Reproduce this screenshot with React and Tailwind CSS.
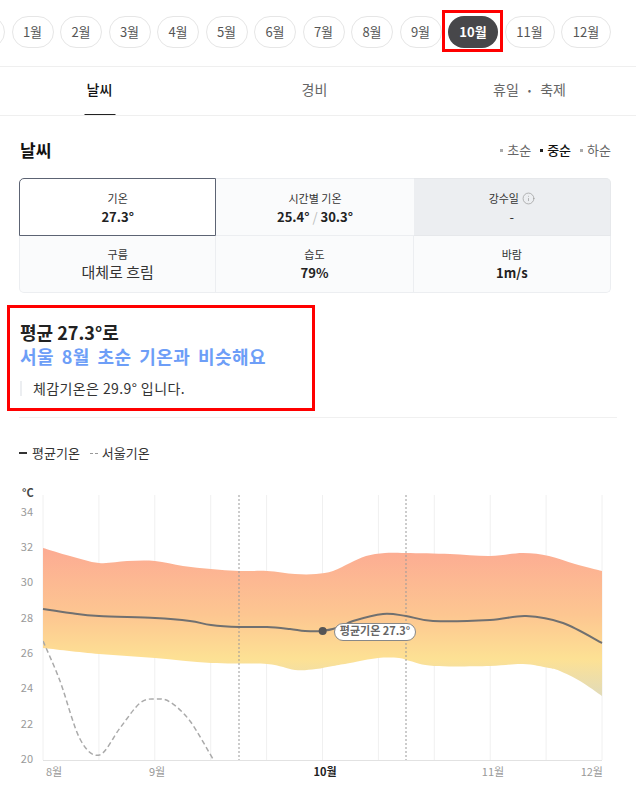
import { Info } from "lucide-react";

const MONTHS = ["1월", "2월", "3월", "4월", "5월", "6월", "7월", "8월", "9월", "10월", "11월", "12월"];

// page y -> svg y: chart svg starts at page y = 480
const BAND_TOP = [
  [43, 67], [70, 75], [99, 82], [127, 80], [155, 80], [183, 85], [211, 88], [239, 90], [267, 90],
  [295, 93], [316, 93], [333, 90], [350, 82], [366, 75], [385, 72], [406, 72], [450, 73], [490, 75],
  [523, 72], [549, 75], [575, 83], [602, 90],
];
const BAND_BOTTOM = [
  [602, 215], [580, 200], [560, 190], [549, 187], [523, 183], [490, 185], [434, 185], [410, 180],
  [399, 177], [378, 177], [350, 182], [333, 185], [316, 188], [295, 189], [267, 183], [211, 182],
  [155, 177], [99, 173], [43, 167],
];
const AVG = [
  [43, 128], [70, 132], [99, 135], [155, 137], [190, 140], [211, 144], [239, 146], [267, 146],
  [290, 148], [305, 150], [322, 150], [340, 146], [353, 140], [383, 133], [406, 135], [433, 140],
  [490, 139], [526, 135], [563, 142], [602, 162],
];
const SEOUL = [
  [43, 160], [60, 200], [80, 258], [99.5, 274], [120, 247], [140, 222], [155, 218], [170, 221],
  [190, 240], [213, 278], [222, 292],
];

function smooth(pts, move = true) {
  let d = move ? `M${pts[0][0]},${pts[0][1]}` : `L${pts[0][0]},${pts[0][1]}`;
  for (let i = 0; i < pts.length - 1; i++) {
    const p0 = pts[i - 1] || pts[i];
    const p1 = pts[i];
    const p2 = pts[i + 1];
    const p3 = pts[i + 2] || p2;
    const c1x = p1[0] + (p2[0] - p0[0]) / 6;
    const c1y = p1[1] + (p2[1] - p0[1]) / 6;
    const c2x = p2[0] - (p3[0] - p1[0]) / 6;
    const c2y = p2[1] - (p3[1] - p1[1]) / 6;
    d += ` C${c1x},${c1y} ${c2x},${c2y} ${p2[0]},${p2[1]}`;
  }
  return d;
}

const yOf = (t) => 279 - (t - 20) * 17.65;

function Chart() {
  const grid = Array.from({ length: 11 }, (_, i) => 43 + i * 55.9);
  return (
    <svg width="636" height="315" className="block">
      <defs>
        <linearGradient id="band" x1="0" y1="67" x2="0" y2="215" gradientUnits="userSpaceOnUse">
          <stop offset="0" stopColor="#fcab93" />
          <stop offset="0.45" stopColor="#fdc691" />
          <stop offset="0.75" stopColor="#fde194" />
          <stop offset="1" stopColor="#e1dbb9" />
        </linearGradient>
        <clipPath id="plot">
          <rect x="43" y="14" width="559" height="265" />
        </clipPath>
      </defs>

      <text x="22" y="13" fontSize="11" fontWeight="600" fill="#444" dominantBaseline="middle">°C</text>
      {[34, 32, 30, 28, 26, 24, 22, 20].map((t) => (
        <text key={t} x="33" y={yOf(t)} fontSize="11" fill="#999" textAnchor="end" dominantBaseline="middle">
          {t}
        </text>
      ))}

      {grid.map((x) => (
        <line key={x} x1={x} y1="14" x2={x} y2="279" stroke="#f0f0f0" />
      ))}
      <line x1="43" y1="279.5" x2="602" y2="279.5" stroke="#e2e2e2" />

      <path d={`${smooth(BAND_TOP)} ${smooth(BAND_BOTTOM, false)} Z`} fill="url(#band)" />

      <line x1="239" y1="14" x2="239" y2="279" stroke="#999" strokeDasharray="2 2" />
      <line x1="406" y1="14" x2="406" y2="279" stroke="#999" strokeDasharray="2 2" />

      <path d={smooth(SEOUL)} fill="none" stroke="#aaa" strokeWidth="1.5" strokeDasharray="5 3" clipPath="url(#plot)" />
      <path d={smooth(AVG)} fill="none" stroke="#707070" strokeWidth="2" />

      <circle cx="322.7" cy="150" r="4" fill="#555" />
      <rect x="334.5" y="142.5" width="81" height="17" rx="8.5" fill="#fff" stroke="#888" />
      <text x="375" y="151.5" fontSize="11" fontWeight="700" fill="#666" textAnchor="middle" dominantBaseline="middle">
        평균기온 27.3°
      </text>

      <text x="46" y="292" fontSize="11" fill="#999" dominantBaseline="middle">8월</text>
      <text x="157" y="292" fontSize="11" fill="#999" textAnchor="middle" dominantBaseline="middle">9월</text>
      <text x="325" y="292" fontSize="11" fontWeight="700" fill="#222" textAnchor="middle" dominantBaseline="middle">10월</text>
      <text x="493" y="292" fontSize="11" fill="#999" textAnchor="middle" dominantBaseline="middle">11월</text>
      <text x="603" y="292" fontSize="11" fill="#999" textAnchor="end" dominantBaseline="middle">12월</text>
    </svg>
  );
}

function Cell({ label, children, className = "", top = true, extra }) {
  return (
    <div className={`flex flex-col items-center ${top ? "pt-[12px]" : "pt-[11px]"} ${className}`}>
      <div className="flex items-center gap-[3px] text-[11px] leading-[14px] text-[#333]">
        {label}
        {extra}
      </div>
      {children}
    </div>
  );
}

function Dot({ dark }) {
  return <span className={`w-[3px] h-[3px] ${dark ? "bg-[#222]" : "bg-[#aaa]"} mr-[4px]`} />;
}

export default function App() {
  return (
    <div className="relative w-[636px] h-[795px] overflow-hidden bg-white font-['Noto_Sans_CJK_KR',sans-serif]">
      {/* 월 선택 */}
      <div className="h-[67px] border-b border-[#efefef] pt-[16px] overflow-hidden">
        <div className="flex gap-[6.5px] -ml-[45px]">
          <div className="w-[50px] h-8 shrink-0 rounded-full border border-[#e6e6e6]" />
          {MONTHS.map((m) => {
            const active = m === "10월";
            const wide = m.length > 2;
            return (
              <div
                key={m}
                className={`${wide ? "w-[50px]" : "w-[42px]"} h-8 shrink-0 rounded-full flex items-center justify-center text-[13px] ${
                  active ? "bg-[#47474a] text-white font-bold" : "border border-[#e6e6e6] text-[#555]"
                }`}
              >
                {m}
              </div>
            );
          })}
        </div>
      </div>

      {/* 탭 */}
      <div className="h-[49px] border-b border-[#efefef] overflow-hidden">
        <div className="-ml-2 w-[645px] grid grid-cols-3 h-full">
          <div className="relative flex items-center justify-center pb-[4px] text-[14px] font-medium text-[#111]">
            날씨
            <span className="absolute bottom-[-1px] left-1/2 -translate-x-1/2 w-[31px] h-[2px] bg-[#222]" />
          </div>
          <div className="flex items-center justify-center pb-[4px] text-[14px] text-[#666]">경비</div>
          <div className="flex items-center justify-center pb-[4px] text-[14px] text-[#666]">
            휴일 <span className="mx-[9px] text-[10px]">•</span> 축제
          </div>
        </div>
      </div>

      {/* 날씨 헤더 */}
      <div className="pl-[20px] pr-[25px] pt-[22px] h-[49px] flex items-start justify-between">
        <div className="h-6 flex items-center text-[17px] font-bold text-[#111]">날씨</div>
        <div className="h-6 flex items-center text-[13px] text-[#666]">
          <Dot />
          초순
          <span className="w-[9px]" />
          <Dot dark />
          <span className="text-[#111] font-medium">중순</span>
          <span className="w-[9px]" />
          <Dot />
          하순
        </div>
      </div>

      {/* 표 */}
      <div className="ml-[19px] mr-[25px] mt-[13px] grid grid-cols-3">
        <Cell label="기온" className="h-[58px] bg-white border border-[#5c6373] rounded-tl-[5px]">
          <div className="mt-[3px] text-[13px] leading-[18px] font-bold text-[#222]">27.3°</div>
        </Cell>
        <Cell label="시간별 기온" className="h-[58px] bg-[#fafbfc] border-y border-[#eceef1]">
          <div className="mt-[3px] text-[13px] leading-[18px] font-bold text-[#222]">
            25.4° <span className="font-normal text-[#bbb]">/</span> 30.3°
          </div>
        </Cell>
        <Cell
          label="강수일"
          className="h-[58px] bg-[#eceef1] border-y border-r border-[#e6e8eb] rounded-tr-[5px]"
          extra={<Info size={13} strokeWidth={1.3} className="text-[#999]" />}
        >
          <div className="mt-[3px] text-[13px] leading-[18px] text-[#333]">-</div>
        </Cell>
        <Cell label="구름" top={false} className="h-[57px] bg-[#fafbfc] border-x border-b border-[#eceef1] rounded-bl-[5px]">
          <div className="mt-[2px] text-[15px] leading-[18px] text-[#333]">대체로 흐림</div>
        </Cell>
        <Cell label="습도" top={false} className="h-[57px] bg-[#fafbfc] border-r border-b border-[#eceef1]">
          <div className="mt-[3px] text-[13px] leading-[18px] font-bold text-[#222]">79%</div>
        </Cell>
        <Cell label="바람" top={false} className="h-[57px] bg-[#fafbfc] border-r border-b border-[#eceef1] rounded-br-[5px]">
          <div className="mt-[3px] text-[13px] leading-[18px] font-bold text-[#222]">1m/s</div>
        </Cell>
      </div>

      {/* 요약 */}
      <div className="px-[20px] mt-[27px]">
        <div className="text-[18px] leading-[24px] font-bold text-[#222]">평균 27.3°로</div>
        <div className="text-[18px] leading-[25px] font-bold text-[#6d9ef7] tracking-[0.5px] [word-spacing:3px]">
          서울 8월 초순 기온과 비슷해요
        </div>
        <div className="mt-[12px] flex items-center">
          <span className="w-[2px] h-[15px] bg-[#eceef1]" />
          <span className="ml-[11px] text-[14px] leading-[15px] text-[#333] tracking-[0.4px]">체감기온은 29.9° 입니다.</span>
        </div>
      </div>
      <div className="mx-[19px] mt-[21px] border-t border-[#f0f0f0]" />

      {/* 범례 */}
      <div className="pl-[19px] pt-[26px] h-[44px] flex items-start text-[13px] leading-[18px] text-[#333]">
        <div className="h-[18px] flex items-center">
          <span className="w-[8px] h-[2px] bg-[#333]" />
          <span className="ml-[5px]">평균기온</span>
          <span className="ml-[10px] w-[3px] h-[1px] bg-[#999]" />
          <span className="ml-[2px] w-[3px] h-[1px] bg-[#999]" />
          <span className="ml-[4px]">서울기온</span>
        </div>
      </div>

      <div className="mt-[19px]">
        <Chart />
      </div>

      {/* 강조 표시 */}
      <div className="absolute left-[442px] top-[10px] w-[61px] h-[42px] border-[3px] border-[#ff0000]" />
      <div className="absolute left-[7px] top-[305px] w-[308px] h-[106px] border-[3px] border-[#ff0000]" />
    </div>
  );
}
